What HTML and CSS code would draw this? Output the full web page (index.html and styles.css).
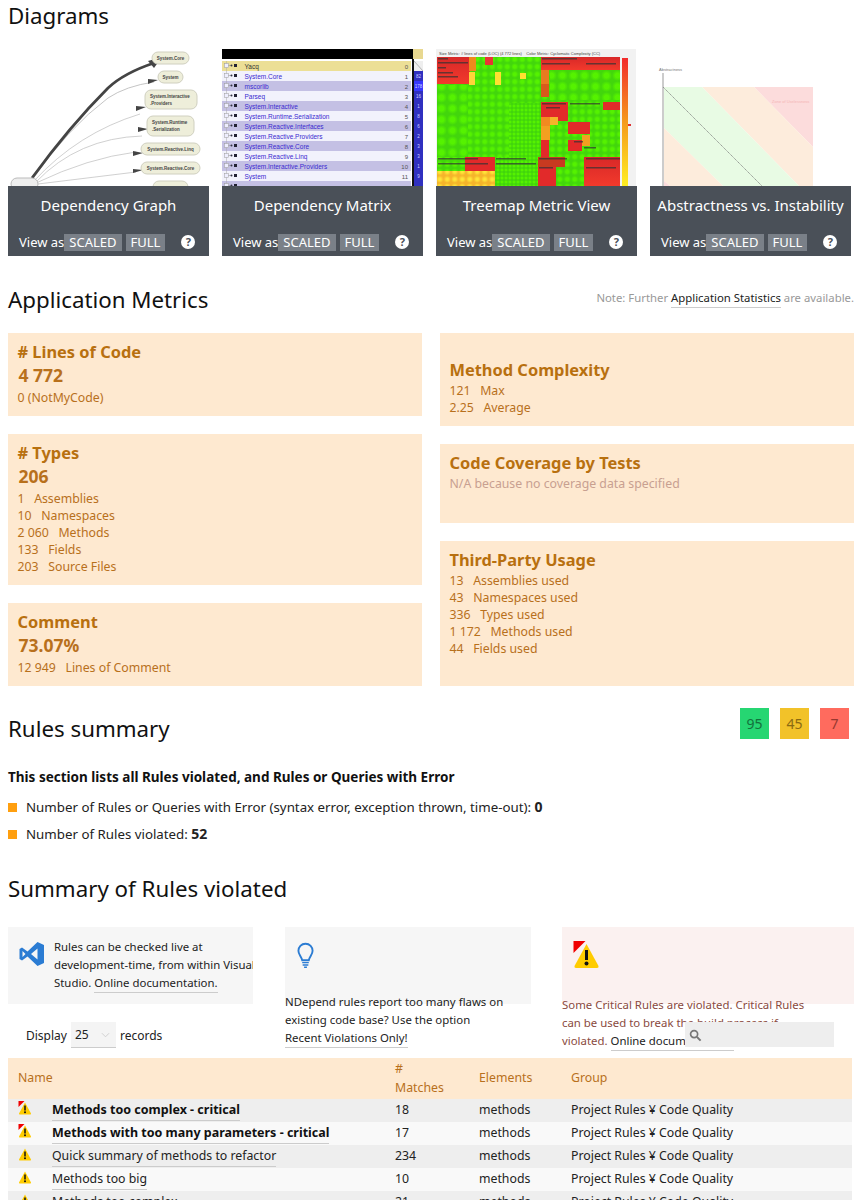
FILE: index.html
```html
<!DOCTYPE html>
<html lang="en">
<head>
    <meta charset="UTF-8">
    <meta name="viewport" content="width=device-width, initial-scale=1.0">
    <title>NDepend Report</title>
    <link rel="stylesheet" href="styles.css">
</head>
<body>
  <svg class="defs" width="0" height="0">
    <defs>
      <symbol id="warn" viewBox="0 0 26 28">
        <path d="M13 3 L25 25 Q25.500 27 23.500 27 L2.500 27 Q0.500 27 1 25 Z" fill="#ffcc00"/>
        <rect x="11.500" y="9" width="3" height="10" fill="#111"/>
        <circle cx="13" cy="22.500" r="2" fill="#111"/>
      </symbol>
      <symbol id="warn-critical" viewBox="0 0 26 28">
        <use href="#warn" width="26" height="28"/>
        <path d="M0 0 L12 0 L0 12 Z" fill="#f00000"/>
      </symbol>
      <radialGradient id="gr"><stop offset="0.4" stop-color="#55f200"/><stop offset="1" stop-color="#42d60c"/></radialGradient>
      <radialGradient id="ye"><stop offset="0.3" stop-color="#ffe63a"/><stop offset="1" stop-color="#f5b42a"/></radialGradient>
      <pattern id="cushion-l" width="11" height="11" patternUnits="userSpaceOnUse"><rect width="11" height="11" fill="url(#gr)"/></pattern>
      <pattern id="cushion-m" width="7.500" height="7.500" patternUnits="userSpaceOnUse"><rect width="7.500" height="7.500" fill="url(#gr)"/></pattern>
      <pattern id="cushion-s" width="4" height="4" patternUnits="userSpaceOnUse"><rect width="4" height="4" fill="url(#gr)"/></pattern>
      <pattern id="cushion-y" width="7.500" height="7.500" patternUnits="userSpaceOnUse"><rect width="7.500" height="7.500" fill="url(#ye)"/></pattern>
      <pattern id="tree-row" width="10" height="10" patternUnits="userSpaceOnUse" x="2" y="13">
        <rect x="0.500" y="2.500" width="4" height="4" fill="#eef" stroke="#999" stroke-width="0.500"/>
        <path d="M4.500 4.500 H8" stroke="#888" stroke-width="0.500"/>
        <circle cx="7.500" cy="4.500" r="1" fill="#334"/>
      </pattern>
      <pattern id="tree-box" width="10" height="10" patternUnits="userSpaceOnUse" x="12" y="13">
        <rect x="0" y="3" width="3" height="3" fill="#223"/>
      </pattern>
      <linearGradient id="redblock" x2="0" y2="1"><stop offset="0" stop-color="#d82828"/><stop offset="1" stop-color="#f23a2c"/></linearGradient>
      <linearGradient id="heat" x2="0" y2="1"><stop offset="0" stop-color="#f22c2c"/><stop offset="0.5" stop-color="#f59a1c"/><stop offset="1" stop-color="#ffee22"/></linearGradient>
    </defs>
  </svg>

  <h2 class="section-title">Diagrams</h2>
  <div class="diagrams">
    <div class="diagram">
      <svg class="thumb" viewBox="0 0 201 138">
        <g fill="none" stroke="#bbb" stroke-width="0.700">
          <path d="M24 132 Q60 80 100 50 Q118 38 146 34" stroke="#aaa"/>
          <path d="M26 133 Q70 85 132 66"/>
          <path d="M28 134 Q70 90 134 88"/>
          <path d="M28 135 Q80 110 128 104"/>
          <path d="M30 136 L128 124"/>
        </g>
        <path d="M24 130 Q62 78 100 40 Q116 25 146 15" fill="none" stroke="#444" stroke-width="2.800"/>
        <g fill="#444">
          <path d="M140 13 L154 9 L146 20 Z"/>
          <path d="M140 31 L150 32 L140 36 Z"/>
          <path d="M128 58 L138 59 L128 63 Z"/>
          <path d="M130 79 L140 81 L130 84 Z"/>
          <path d="M125 103 L135 105 L125 108 Z"/>
          <path d="M125 121 L135 122 L125 125 Z"/>
        </g>
        <g fill="#eeeeda" stroke="#d0d0c0">
          <rect x="144" y="4" width="37" height="12" rx="6"/>
          <rect x="150" y="23" width="25" height="12" rx="6"/>
          <rect x="137" y="42" width="52" height="19" rx="6"/>
          <rect x="139" y="68" width="47" height="20" rx="6"/>
          <rect x="133" y="95" width="59" height="12" rx="6"/>
          <rect x="133" y="114" width="59" height="12" rx="6"/>
          <rect x="145" y="133" width="35" height="12" rx="6"/>
          <rect x="3" y="130" width="27" height="12" rx="6" fill="#eee" stroke="#bbb"/>
        </g>
        <g class="node-text">
          <text x="162.500" y="12" text-anchor="middle">System.Core</text>
          <text x="162.500" y="31" text-anchor="middle">System</text>
          <text x="142" y="50">System.Interactive</text>
          <text x="142" y="57">.Providers</text>
          <text x="144" y="76">System.Runtime</text>
          <text x="144" y="83">.Serialization</text>
          <text x="162.500" y="103" text-anchor="middle">System.Reactive.Linq</text>
          <text x="162.500" y="122" text-anchor="middle">System.Reactive.Core</text>
        </g>
      </svg>
      <div class="caption">
        <div class="caption-title">Dependency Graph</div>
        <div class="caption-actions"><span>View as</span><a class="tag">SCALED</a><a class="tag tag-full">FULL</a><a class="help">?</a></div>
      </div>
    </div>

    <div class="diagram">
      <svg class="thumb" viewBox="0 0 201 138">
        <rect x="0" y="1" width="191" height="10" fill="#000"/>
        <rect x="191" y="1" width="10" height="10" fill="#e8d890"/>
        <rect x="190" y="11" width="2" height="127" fill="#111"/>
        <rect x="0" y="13" width="189" height="10" fill="#ecdf96"/>
        <g fill="#f2f2fc">
          <rect y="23" width="189" height="10"/><rect y="43" width="189" height="10"/><rect y="63" width="189" height="10"/><rect y="83" width="189" height="10"/><rect y="103" width="189" height="10"/><rect y="123" width="189" height="10"/>
        </g>
        <g fill="#c4c0e4">
          <rect y="33" width="189" height="10"/><rect y="53" width="189" height="10"/><rect y="73" width="189" height="10"/><rect y="93" width="189" height="10"/><rect y="113" width="189" height="10"/><rect y="133" width="189" height="5"/>
        </g>
        <rect x="192" y="23" width="9" height="115" fill="#3030c0"/>
        <rect x="192" y="33" width="9" height="10" fill="#3838ff"/>
        <path d="M192 13 H201 V23 H192 Z" fill="#eee"/>
        <path d="M192 13 L201 23" stroke="#777" stroke-width="0.500"/>
        <path d="M4.500 13 V138" stroke="#aaa" stroke-width="0.500"/>
        <rect x="2" y="13" width="10" height="125" fill="url(#tree-row)"/>
        <rect x="12" y="13" width="4" height="125" fill="url(#tree-box)"/>
        <g class="matrix-text">
          <text x="22.500" y="21" fill="#333">Yacq</text>
          <text x="22.500" y="31">System.Core</text>
          <text x="22.500" y="41">mscorlib</text>
          <text x="22.500" y="51">Parseq</text>
          <text x="22.500" y="61">System.Interactive</text>
          <text x="22.500" y="71">System.Runtime.Serialization</text>
          <text x="22.500" y="81">System.Reactive.Interfaces</text>
          <text x="22.500" y="91">System.Reactive.Providers</text>
          <text x="22.500" y="101">System.Reactive.Core</text>
          <text x="22.500" y="111">System.Reactive.Linq</text>
          <text x="22.500" y="121">System.Interactive.Providers</text>
          <text x="22.500" y="131">System</text>
        </g>
        <g class="matrix-num" text-anchor="end">
          <text x="186" y="21">0</text><text x="186" y="31">1</text><text x="186" y="41">2</text><text x="186" y="51">3</text><text x="186" y="61">4</text><text x="186" y="71">5</text><text x="186" y="81">6</text><text x="186" y="91">7</text><text x="186" y="101">8</text><text x="186" y="111">9</text><text x="186" y="121">10</text><text x="186" y="131">11</text>
        </g>
        <g class="matrix-val" text-anchor="middle">
          <text x="196.500" y="30">82</text><text x="196.500" y="40">178</text><text x="196.500" y="50">16</text><text x="196.500" y="60">1</text><text x="196.500" y="70">8</text><text x="196.500" y="80">6</text><text x="196.500" y="90">2</text><text x="196.500" y="100">3</text><text x="196.500" y="110">3</text><text x="196.500" y="120">1</text><text x="196.500" y="130">9</text>
        </g>
      </svg>
      <div class="caption">
        <div class="caption-title">Dependency Matrix</div>
        <div class="caption-actions"><span>View as</span><a class="tag">SCALED</a><a class="tag tag-full">FULL</a><a class="help">?</a></div>
      </div>
    </div>

    <div class="diagram">
      <svg class="thumb" viewBox="0 0 201 138">
        <rect x="0" y="1" width="200" height="137" fill="#f2f2f2"/>
        <text class="map-head" x="3" y="7">Size Metric: # lines of code (LOC) (4 772 lines)    Color Metric: Cyclomatic Complexity (CC)</text>
        <rect x="1" y="9" width="183" height="129" fill="url(#cushion-m)"/>
        <rect x="1" y="37" width="31" height="72" fill="url(#cushion-l)"/>
        <rect x="33" y="37" width="40" height="72" fill="url(#cushion-m)"/>
        <rect x="73" y="55" width="32" height="54" fill="url(#cushion-s)"/>
        <rect x="114" y="22" width="70" height="30" fill="url(#cushion-l)"/>
        <rect x="1" y="9" width="33" height="27" fill="url(#redblock)"/>
        <rect x="33" y="9" width="7" height="14" fill="#ee8a1c"/>
        <rect x="33" y="24" width="6" height="13" fill="#ffd43a"/>
        <rect x="49" y="9" width="8" height="8" fill="#e93434"/>
        <rect x="59" y="24" width="6" height="13" fill="#ffe030"/>
        <rect x="84" y="25" width="6" height="6" fill="#ffe030"/>
        <rect x="105" y="9" width="79" height="13" fill="url(#redblock)"/>
        <rect x="105" y="22" width="8" height="14" fill="#e87b20"/>
        <rect x="105" y="36" width="8" height="13" fill="#d85a1c"/>
        <rect x="105" y="54" width="27" height="19" fill="#e22a2a"/>
        <rect x="167" y="54" width="17" height="8" fill="#e22a2a"/>
        <rect x="132" y="74" width="22" height="12" fill="#e22a2a"/>
        <rect x="105" y="69" width="9" height="9" fill="#f28a20"/>
        <rect x="114" y="69" width="8" height="8" fill="#f5b42a"/>
        <rect x="105" y="78" width="9" height="14" fill="#f2a020"/>
        <rect x="105" y="92" width="8" height="17" fill="#e22a2a"/>
        <rect x="132" y="92" width="14" height="11" fill="#e22a2a"/>
        <rect x="146" y="87" width="8" height="11" fill="#f2a020"/>
        <rect x="1" y="109" width="64" height="29" fill="url(#cushion-y)"/>
        <rect x="1" y="109" width="28" height="14" fill="url(#cushion-m)"/>
        <rect x="29" y="109" width="30" height="14" fill="#e22a2a"/>
        <rect x="59" y="109" width="43" height="29" fill="url(#cushion-s)"/>
        <rect x="102" y="109" width="27" height="10" fill="#c83a20"/>
        <rect x="102" y="119" width="18" height="19" fill="#e22a2a"/>
        <rect x="120" y="119" width="26" height="14" fill="url(#cushion-m)"/>
        <rect x="148" y="109" width="36" height="29" fill="url(#redblock)"/>
        <rect x="186" y="10" width="6" height="128" fill="url(#heat)"/>
        <rect x="192" y="76" width="3" height="2" fill="#d33"/>
        <g fill="#333" opacity="0.700">
          <rect x="2" y="10" width="10" height="1.500"/><rect x="2" y="14" width="30" height="1.500"/><rect x="2" y="19" width="8" height="1.500"/><rect x="2" y="24" width="15" height="1.500"/><rect x="2" y="28" width="20" height="1.500"/>
          <rect x="106" y="10" width="35" height="1.500"/><rect x="106" y="15" width="28" height="1.500"/><rect x="150" y="15" width="30" height="1.500"/>
          <rect x="106" y="55" width="24" height="1.500"/><rect x="110" y="59" width="14" height="1.500"/><rect x="134" y="55" width="16" height="1.500"/><rect x="150" y="55" width="14" height="1.500"/>
          <rect x="2" y="110" width="40" height="1.500"/><rect x="2" y="115" width="50" height="1.500"/><rect x="60" y="110" width="30" height="1.500"/><rect x="60" y="115" width="40" height="1.500"/>
          <rect x="103" y="110" width="28" height="1.500"/><rect x="103" y="119" width="14" height="1.500"/><rect x="150" y="110" width="34" height="1.500"/><rect x="150" y="119" width="30" height="1.500"/>
          <rect x="148" y="99" width="12" height="1.500"/><rect x="138" y="93" width="9" height="1.500"/>
        </g>
      </svg>
      <div class="caption">
        <div class="caption-title">Treemap Metric View</div>
        <div class="caption-actions"><span>View as</span><a class="tag">SCALED</a><a class="tag tag-full">FULL</a><a class="help">?</a></div>
      </div>
    </div>

    <div class="diagram">
      <svg class="thumb" viewBox="0 0 201 138">
        <polygon points="104,39 163,39 163,99" fill="#fcdcdc"/>
        <polygon points="52,39 104,39 163,99 163,138 149,138" fill="#fdecdc"/>
        <polygon points="13,39 52,39 149,138 73,138 13,79" fill="#e8fbe4"/>
        <polygon points="13,79 73,138 20,138 13,132" fill="#fdecdc"/>
        <polygon points="13,132 20,138 13,138" fill="#fcdcdc"/>
        <rect x="12" y="25" width="2" height="113" fill="#ccc"/>
        <path d="M13 39 L112 138" stroke="#777" stroke-width="0.700" stroke-dasharray="1.500 0.500"/>
        <text class="axis-label" x="9" y="23">Abstractness</text>
        <text class="zone-label" x="122" y="55">Zone of Uselessness</text>
      </svg>
      <div class="caption">
        <div class="caption-title">Abstractness vs. Instability</div>
        <div class="caption-actions"><span>View as</span><a class="tag">SCALED</a><a class="tag tag-full">FULL</a><a class="help">?</a></div>
      </div>
    </div>
  </div>

  <div class="title-row metrics-title">
    <h2 class="section-title">Application Metrics</h2>
    <p class="note">Note: Further <a class="doc-link">Application Statistics</a> are available.</p>
  </div>
  <div class="metrics">
    <div class="metric-col">
      <div class="metric metric-loc">
        <h3>#&nbsp;Lines of Code</h3>
        <div class="metric-value">4 772</div>
        <div>0 (NotMyCode)</div>
      </div>
      <div class="metric metric-types">
        <h3># Types</h3>
        <div class="metric-value">206</div>
        <div>1 &nbsp; Assemblies</div>
        <div>10 &nbsp; Namespaces</div>
        <div>2 060 &nbsp; Methods</div>
        <div>133 &nbsp; Fields</div>
        <div>203 &nbsp; Source Files</div>
      </div>
      <div class="metric metric-comment">
        <h3>Comment</h3>
        <div class="metric-value">73.07%</div>
        <div>12 949 &nbsp; Lines of Comment</div>
      </div>
    </div>
    <div class="metric-col metric-col-plain">
      <div class="metric metric-complex">
        <h3>Method Complexity</h3>
        <div>121 &nbsp; Max</div>
        <div>2.25 &nbsp; Average</div>
      </div>
      <div class="metric metric-cover">
        <h3>Code Coverage by Tests</h3>
        <div class="metric-na">N/A because no coverage data specified</div>
      </div>
      <div class="metric metric-third">
        <h3>Third-Party Usage</h3>
        <div>13 &nbsp; Assemblies used</div>
        <div>43 &nbsp; Namespaces used</div>
        <div>336 &nbsp; Types used</div>
        <div>1 172 &nbsp; Methods used</div>
        <div>44 &nbsp; Fields used</div>
      </div>
    </div>
  </div>

  <div class="title-row rules-title">
    <h2 class="section-title">Rules summary</h2>
    <div class="badges">
      <span class="badge badge-green">95</span>
      <span class="badge badge-yellow">45</span>
      <span class="badge badge-red">7</span>
    </div>
  </div>
  <p class="lead">This section lists all Rules violated, and Rules or Queries with Error</p>
  <ul class="rule-list">
    <li>Number of Rules or Queries with Error (syntax error, exception thrown, time-out): <b>0</b></li>
    <li>Number of Rules violated: <b>52</b></li>
  </ul>

  <h2 class="section-title violated-title">Summary of Rules violated</h2>
  <div class="panels">
    <div class="panel panel-vs">
      <svg class="vs-logo" viewBox="0 0 26 26">
        <path d="M18.500 1 L25 4 V22 L18.500 25 L8.500 15.500 L3 19.500 L0.500 18 V8 L3 6.500 L8.500 10.500 Z M18.500 7.500 L12 13 L18.500 18.500 Z M3.500 10 V16 L6.500 13 Z" fill="#2b7cd3" fill-rule="evenodd"/>
      </svg>
      <p>Rules can be checked live at development-time, from within Visual Studio. <a class="doc-link">Online documentation.</a></p>
    </div>
    <div class="panel panel-tip">
      <svg class="bulb" viewBox="0 0 18 28">
        <path d="M9 1.500 C4.500 1.500 1.500 5 1.500 9 C1.500 13 4.500 15 5.500 19 H12.500 C13.500 15 16.500 13 16.500 9 C16.500 5 13.500 1.500 9 1.500 Z" fill="none" stroke="#2b7cd3" stroke-width="2"/>
        <path d="M5.500 21.500 H12.500 M6 24 H12 M7.500 26.500 H10.500" stroke="#2b7cd3" stroke-width="1.500"/>
      </svg>
      <p>NDepend rules report too many flaws on<br>existing code base? Use the option<br><a class="doc-link">Recent Violations Only!</a></p>
    </div>
    <div class="panel panel-critical">
      <svg class="warn-big"><use href="#warn-critical"/></svg>
      <p>Some Critical Rules are violated. Critical Rules can be used to break the build process if violated. <a class="doc-link">Online documentation.</a></p>
    </div>
  </div>

  <div class="table-tools">
    <label class="length">Display <span class="length-select">25<svg viewBox="0 0 10 6" class="chev"><path d="M1 1 L5 5 L9 1" fill="none" stroke="#ccc"/></svg></span> records</label>
    <div class="search">
      <svg viewBox="0 0 14 14" class="search-icon"><circle cx="5.500" cy="5.500" r="3.800" fill="none" stroke="#777" stroke-width="1.800"/><path d="M8.500 8.500 L12.500 12.500" stroke="#777" stroke-width="2.200"/></svg>
    </div>
  </div>

  <table class="rules-table">
    <colgroup><col class="col-name"><col class="col-match"><col class="col-el"><col></colgroup>
    <thead>
      <tr><th>Name</th><th>#<br>Matches</th><th>Elements</th><th>Group</th></tr>
    </thead>
    <tbody>
      <tr><td><svg class="warn"><use href="#warn-critical"/></svg><a class="rule crit">Methods too complex - critical</a></td><td>18</td><td>methods</td><td>Project Rules ¥ Code Quality</td></tr>
      <tr><td><svg class="warn"><use href="#warn-critical"/></svg><a class="rule crit">Methods with too many parameters - critical</a></td><td>17</td><td>methods</td><td>Project Rules ¥ Code Quality</td></tr>
      <tr><td><svg class="warn"><use href="#warn"/></svg><a class="rule">Quick summary of methods to refactor</a></td><td>234</td><td>methods</td><td>Project Rules ¥ Code Quality</td></tr>
      <tr><td><svg class="warn"><use href="#warn"/></svg><a class="rule">Methods too big</a></td><td>10</td><td>methods</td><td>Project Rules ¥ Code Quality</td></tr>
      <tr><td><svg class="warn"><use href="#warn"/></svg><a class="rule">Methods too complex</a></td><td>21</td><td>methods</td><td>Project Rules ¥ Code Quality</td></tr>
    </tbody>
  </table>
</body>
</html>
```

FILE: styles.css
```css
html, body {
    height: 1200px;
    overflow: hidden;
}

body {
    margin: 0;
    padding: 0 8px;
    font-family: "Noto Sans", "Noto Sans CJK JP", sans-serif;
    font-size: 12.300px;
    color: #222;
    background-color: #fff;
}

.defs {
    position: absolute;
}

.section-title {
    margin: 0;
    font-size: 22.300px;
    font-weight: normal;
    line-height: 32px;
    color: #111;
}

.diagrams {
    display: flex;
    gap: 13px;
    margin-top: 16px;
    height: 208px;
}

.diagram {
    width: 201px;
    display: flex;
    flex-direction: column;
}

.thumb {
    display: block;
    width: 201px;
    height: 138px;
}

.node-text {
    font: bold 4.500px "Liberation Sans", sans-serif;
    fill: #444;
}

.matrix-text {
    font: 6.500px "Liberation Sans", sans-serif;
    fill: #3a2ad0;
}

.matrix-num {
    font: 6px "Liberation Sans", sans-serif;
    fill: #555;
}

.matrix-val {
    font: 4.500px "Liberation Sans", sans-serif;
    fill: #cfd0ff;
}

.map-head {
    font: 4px "Liberation Sans", sans-serif;
    fill: #444;
    white-space: pre;
}

.axis-label {
    font: 4px "Liberation Sans", sans-serif;
    fill: #777;
}

.zone-label {
    font: 4px "Liberation Sans", sans-serif;
    fill: #f5b5b5;
}

.caption {
    height: 70px;
    background-color: #4a5058;
    color: #fff;
}

.caption-title {
    text-align: center;
    font-size: 15px;
    line-height: 20px;
    padding-top: 9px;
}

.caption-actions {
    display: flex;
    align-items: center;
    padding: 18px 0 0 11px;
    font-size: 13px;
}

.tag {
    background-color: #7a8088;
    padding: 0 5px;
    line-height: 17px;
    height: 17px;
}

.tag-full {
    margin-left: 4px;
}

.help {
    width: 14px;
    height: 14px;
    border-radius: 50%;
    background-color: #fff;
    color: #4a5058;
    font-size: 11px;
    font-weight: bold;
    line-height: 14px;
    text-align: center;
    margin-left: 16px;
}

.title-row {
    display: flex;
    justify-content: space-between;
}

.metrics-title {
    margin-top: 28px;
    height: 49px;
}

.note {
    margin: 6px 0 0;
    font-size: 11.350px;
    color: #999;
}

.doc-link {
    color: #222;
    padding-bottom: 2px;
    border-bottom: 1px solid #ccc;
}

.metrics {
    display: flex;
    gap: 18px;
}

.metric-col {
    width: 414px;
    display: flex;
    flex-direction: column;
    gap: 18px;
}

.metric {
    background-color: #fee9d0;
    color: #b8701c;
    padding: 8px 9.500px;
    line-height: 17px;
    box-sizing: border-box;
}

.metric h3 {
    margin: 0;
    font-size: 16.400px;
    line-height: 21px;
    color: #b8700f;
}

.metric-col-plain h3 {
    margin-bottom: 2px;
}

.metric-value {
    font-size: 17.500px;
    font-weight: bold;
    line-height: 27px;
    padding-left: 1px;
}

.metric-na {
    color: #c8a090;
}

.metric-loc { height: 83px; }
.metric-types { height: 151px; }
.metric-comment { height: 83px; }
.metric-complex { height: 93px; padding-top: 26px; }
.metric-cover { height: 79px; }
.metric-third { height: 145px; }

.rules-title {
    margin-top: 24px;
    height: 51px;
    align-items: flex-start;
}

.rules-title .section-title {
    margin-top: 3px;
}

.badges {
    display: flex;
    gap: 11px;
    margin-right: 5px;
    margin-top: -2px;
}

.badge {
    width: 29px;
    height: 31px;
    line-height: 31px;
    text-align: center;
    font-size: 14px;
}

.badge-green { background-color: #26d672; color: #14713c; }
.badge-yellow { background-color: #f2c229; color: #8a6a12; }
.badge-red { background-color: #ff6b5e; color: #96382f; }

.lead {
    margin: 0;
    font-size: 13.500px;
    font-weight: bold;
    line-height: 32px;
    color: #111;
}

.rule-list {
    list-style: none;
    margin: 0;
    padding: 0;
    font-size: 13.300px;
}

.rule-list li {
    height: 27px;
    line-height: 27px;
    padding-left: 18px;
    position: relative;
}

.rule-list li::before {
    content: "";
    position: absolute;
    left: 0;
    top: 10px;
    width: 9px;
    height: 9px;
    background-color: #ff9f0f;
}

.rule-list b {
    font-size: 14px;
}

.violated-title {
    margin-top: 26px;
}

.panels {
    display: flex;
    gap: 31px;
    margin-top: 22px;
    height: 77px;
    line-height: 18px;
    font-size: 11.400px;
}

.panel {
    background-color: #f6f6f6;
    height: 77px;
    box-sizing: border-box;
}

.panel p {
    margin: 0;
}

.panel-vs {
    width: 245px;
    margin-right: 1px;
    display: flex;
    padding: 11px 0 0 11px;
    gap: 9px;
    overflow: hidden;
}

.panel-vs p {
    flex-shrink: 0;
    width: 205px;
}

.vs-logo {
    width: 26px;
    height: 26px;
    margin-top: 3px;
    flex-shrink: 0;
}

.panel-tip {
    width: 246px;
}

.bulb {
    display: block;
    width: 17px;
    height: 27px;
    margin: 15px 0 24px 12px;
}

.panel-critical {
    width: 292px;
    background-color: #fbf1f0;
    color: #8a4a40;
}

.panel-critical p {
    width: 250px;
}

.warn-big {
    display: block;
    width: 27px;
    height: 28px;
    margin: 14px 0 27px 11px;
}

.table-tools {
    display: flex;
    justify-content: space-between;
    margin-top: 18px;
    height: 36px;
}

.length {
    margin-left: 18px;
    display: flex;
    align-items: flex-start;
    gap: 4px;
    font-size: 12px;
    line-height: 27px;
}

.length-select {
    display: flex;
    align-items: center;
    gap: 12px;
    width: 45px;
    height: 26px;
    box-sizing: border-box;
    padding-left: 4px;
    background-color: #f4f4f4;
    border-bottom: 1px solid #ccc;
}

.chev {
    width: 9px;
    height: 6px;
}

.search {
    position: relative;
    width: 149px;
    height: 25px;
    margin-right: 20px;
    background-color: #eee;
}

.search-icon {
    display: block;
    width: 13px;
    height: 13px;
    margin: 7px 0 0 4px;
}

.rules-table {
    width: 844px;
    border-collapse: collapse;
    table-layout: fixed;
}

.col-name { width: 377px; }
.col-match { width: 84px; }
.col-el { width: 92px; }

.rules-table th {
    background-color: #fee9d0;
    color: #b8701c;
    font-weight: normal;
    text-align: left;
    padding: 0 10px 2px;
    height: 39px;
    line-height: 19px;
}

.rules-table td {
    padding: 0 10px 2px;
    height: 21px;
    line-height: 19px;
    white-space: nowrap;
}

.rules-table tbody tr:nth-child(odd) { background-color: #eee; }
.rules-table tbody tr:nth-child(even) { background-color: #f9f9f9; }

.warn {
    width: 14px;
    height: 14px;
    vertical-align: -1px;
    margin: 0 20px 0 0;
}

.rule {
    padding-bottom: 2px;
    border-bottom: 1px solid #ccc;
}

.crit {
    font-size: 12.500px;
    font-weight: bold;
    color: #111;
}
```
